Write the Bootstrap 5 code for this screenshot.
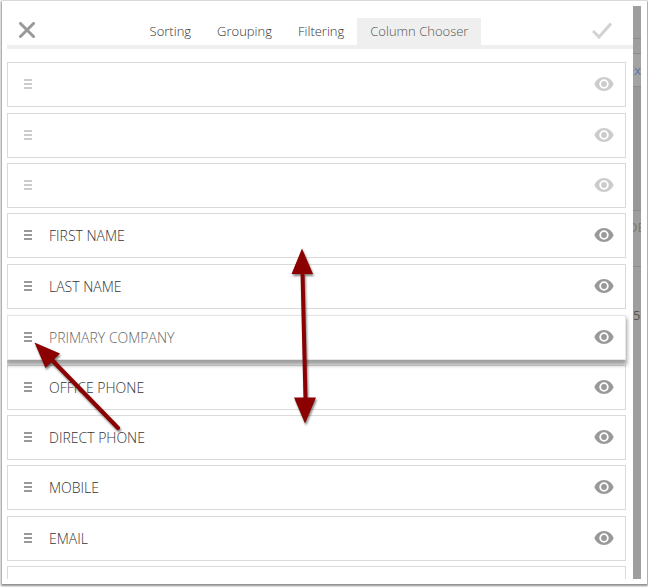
<!DOCTYPE html>
<html lang="en">
<head>
<meta charset="utf-8">
<meta name="viewport" content="width=device-width, initial-scale=1">
<title>Column Chooser</title>
<link rel="stylesheet" href="https://cdn.jsdelivr.net/npm/bootstrap@5.3.0/dist/css/bootstrap.min.css">
<style>
  body { font-family: "Open Sans", "Noto Sans", sans-serif; font-size: 13px; line-height: 20px; color: #444; background: #fff; }
  .frame { height: 100vh; padding: 1px 1px 3px 2px; }
  .sheet { background: #fff; padding: 5px 6px 5px 5px; box-shadow: 0 1px 2px 1px rgba(0,0,0,.45); }
  .chooser { min-width: 0; }
  .topbar { height: 43px; padding-top: 12px; border-bottom: 4px solid #efefef; }
  .iconbtn { line-height: 0; padding: 4px 12px 0; }
  .iconbtn.ok { padding: 4px 21px 0; }
  .tabs button { height: 27px; padding: 0 13px; border: 0; background: none; color: #333; line-height: 27px; font-weight: 300; }
  .tabs button.active { background: #efefef; color: #555; }
  .fields { padding: 13px 7px 0 0; }
  .field { height: 45px; flex: none; margin-bottom: 5px; border: 1px solid #dadada; background: #fff; padding: 0 11px 2px 16px; color: #333; font-size: 14px; font-weight: 300; }
  .field.spaced { margin-bottom: 6px; }
  .field span { padding: 2px 0 0 17px; }
  .field button { line-height: 0; color: #999; }
  .field.locked button { color: #ccc; }
  .field.dragging { color: #666; border-color: #e6e6e6; box-shadow: 0 4px 4px 1px rgba(0,0,0,.38); z-index: 1; }
  .behind { width: 8px; background: #9e9e9e; color: #777; line-height: 20px; }
  .behind div { flex: none; border-bottom: 1px solid #8c8c8c; }
  .b1 { height: 33px; } .b2 { height: 15px; }
  .b3 { height: 33px; padding-top: 6px; color: #5c75a5; background: #a3a3a3; }
  .b4 { height: 124px; background: #989898; } .b5 { height: 56px; padding-top: 6px; }
  .b6 { padding-top: 38px; color: #555; }
  .marks { pointer-events: none; z-index: 5; filter: drop-shadow(1px 2px 1px rgba(0,0,0,.5)); }
</style>
<script src="https://cdn.jsdelivr.net/npm/bootstrap@5.3.0/dist/js/bootstrap.bundle.min.js"></script>
</head>
<body>
<svg width="0" height="0" class="position-absolute" aria-hidden="true">
  <symbol id="eye" viewBox="1 4 22 16"><path fill="currentColor" fill-rule="evenodd" d="M12 4C7 4 2.73 7.300 1 12c1.730 4.700 6 8 11 8s9.270-3.300 11-8c-1.730-4.700-6-8-11-8zM12 17.400a5.400 5.400 0 1 1 0-10.800 5.400 5.400 0 0 1 0 10.800zM12 8.700a3.300 3.300 0 1 0 0 6.600 3.300 3.300 0 0 0 0-6.600z"/></symbol>
  <symbol id="grip" viewBox="0 0 8 10"><path fill="currentColor" d="M0 0h8v2H0zM0 4h8v2H0zM0 8h8v2H0z"/></symbol>
</svg>
<div class="frame position-relative overflow-hidden">
  <main class="sheet d-flex h-100">
    <section class="chooser flex-grow-1 d-flex flex-column overflow-hidden">
      <header class="topbar d-flex justify-content-between flex-shrink-0">
        <button type="button" class="iconbtn btn border-0 align-self-start" aria-label="Close"><svg width="16" height="16" viewBox="0 0 16 16"><path d="M1.500 1.500l13 13M14.500 1.500l-13 13" stroke="#999" stroke-width="3" stroke-linecap="round"/></svg></button>
        <nav class="tabs d-flex align-items-start" aria-label="Grid settings">
          <button type="button">Sorting</button>
          <button type="button">Grouping</button>
          <button type="button">Filtering</button>
          <button type="button" class="active" aria-current="page">Column Chooser</button>
        </nav>
        <button type="button" class="iconbtn ok btn border-0 align-self-start" aria-label="Apply"><svg width="20" height="17" viewBox="0 0 20 17"><path d="M1 9l6 6L19 1.500" fill="none" stroke="#d2d2d2" stroke-width="3"/></svg></button>
      </header>
      <ul class="fields list-unstyled mb-0 d-flex flex-column overflow-hidden flex-grow-1">
        <li class="field locked spaced d-flex align-items-center"><button type="button" class="btn p-0 border-0" aria-label="Move"><svg width="8" height="10"><use href="#grip"/></svg></button><button type="button" class="btn p-0 border-0 ms-auto" aria-label="Show or hide"><svg width="20" height="14"><use href="#eye"/></svg></button></li>
        <li class="field locked d-flex align-items-center"><button type="button" class="btn p-0 border-0" aria-label="Move"><svg width="8" height="10"><use href="#grip"/></svg></button><button type="button" class="btn p-0 border-0 ms-auto" aria-label="Show or hide"><svg width="20" height="14"><use href="#eye"/></svg></button></li>
        <li class="field locked d-flex align-items-center"><button type="button" class="btn p-0 border-0" aria-label="Move"><svg width="8" height="10"><use href="#grip"/></svg></button><button type="button" class="btn p-0 border-0 ms-auto" aria-label="Show or hide"><svg width="20" height="14"><use href="#eye"/></svg></button></li>
        <li class="field spaced d-flex align-items-center"><button type="button" class="btn p-0 border-0" aria-label="Move"><svg width="8" height="10"><use href="#grip"/></svg></button><span>FIRST NAME</span><button type="button" class="btn p-0 border-0 ms-auto" aria-label="Show or hide"><svg width="20" height="14"><use href="#eye"/></svg></button></li>
        <li class="field spaced d-flex align-items-center"><button type="button" class="btn p-0 border-0" aria-label="Move"><svg width="8" height="10"><use href="#grip"/></svg></button><span>LAST NAME</span><button type="button" class="btn p-0 border-0 ms-auto" aria-label="Show or hide"><svg width="20" height="14"><use href="#eye"/></svg></button></li>
        <li class="field dragging d-flex align-items-center"><button type="button" class="btn p-0 border-0" aria-label="Move"><svg width="8" height="10"><use href="#grip"/></svg></button><span>PRIMARY COMPANY</span><button type="button" class="btn p-0 border-0 ms-auto" aria-label="Show or hide"><svg width="20" height="14"><use href="#eye"/></svg></button></li>
        <li class="field d-flex align-items-center"><button type="button" class="btn p-0 border-0" aria-label="Move"><svg width="8" height="10"><use href="#grip"/></svg></button><span>OFFICE PHONE</span><button type="button" class="btn p-0 border-0 ms-auto" aria-label="Show or hide"><svg width="20" height="14"><use href="#eye"/></svg></button></li>
        <li class="field d-flex align-items-center"><button type="button" class="btn p-0 border-0" aria-label="Move"><svg width="8" height="10"><use href="#grip"/></svg></button><span>DIRECT PHONE</span><button type="button" class="btn p-0 border-0 ms-auto" aria-label="Show or hide"><svg width="20" height="14"><use href="#eye"/></svg></button></li>
        <li class="field spaced d-flex align-items-center"><button type="button" class="btn p-0 border-0" aria-label="Move"><svg width="8" height="10"><use href="#grip"/></svg></button><span>MOBILE</span><button type="button" class="btn p-0 border-0 ms-auto" aria-label="Show or hide"><svg width="20" height="14"><use href="#eye"/></svg></button></li>
        <li class="field d-flex align-items-center"><button type="button" class="btn p-0 border-0" aria-label="Move"><svg width="8" height="10"><use href="#grip"/></svg></button><span>EMAIL</span><button type="button" class="btn p-0 border-0 ms-auto" aria-label="Show or hide"><svg width="20" height="14"><use href="#eye"/></svg></button></li>
        <li class="field"></li>
      </ul>
    </section>
    <aside class="behind d-flex flex-column flex-shrink-0 overflow-hidden" aria-hidden="true">
      <div class="b1"></div><div class="b2"></div><div class="b3 d-flex justify-content-end">Ex</div><div class="b4"></div><div class="b5 d-flex justify-content-center">DB</div><div class="b6 border-0">59</div>
    </aside>
  </main>
  <svg class="marks position-absolute top-0 start-0" width="330" height="440" viewBox="0 0 330 440" fill="#8b0000" stroke="#8b0000" aria-hidden="true">
    <path d="M302.500 272L305.500 400" stroke-width="4"/>
    <path d="M302 248.500L313 274H291.500zM305 423.500L294 397.500H316z" stroke="none"/>
    <path d="M52 360L118 428" stroke-width="4" stroke-linecap="round"/>
    <path d="M34.500 342.500L60 353.500L45.500 368z" stroke="none"/>
  </svg>
</div>
</body>
</html>
